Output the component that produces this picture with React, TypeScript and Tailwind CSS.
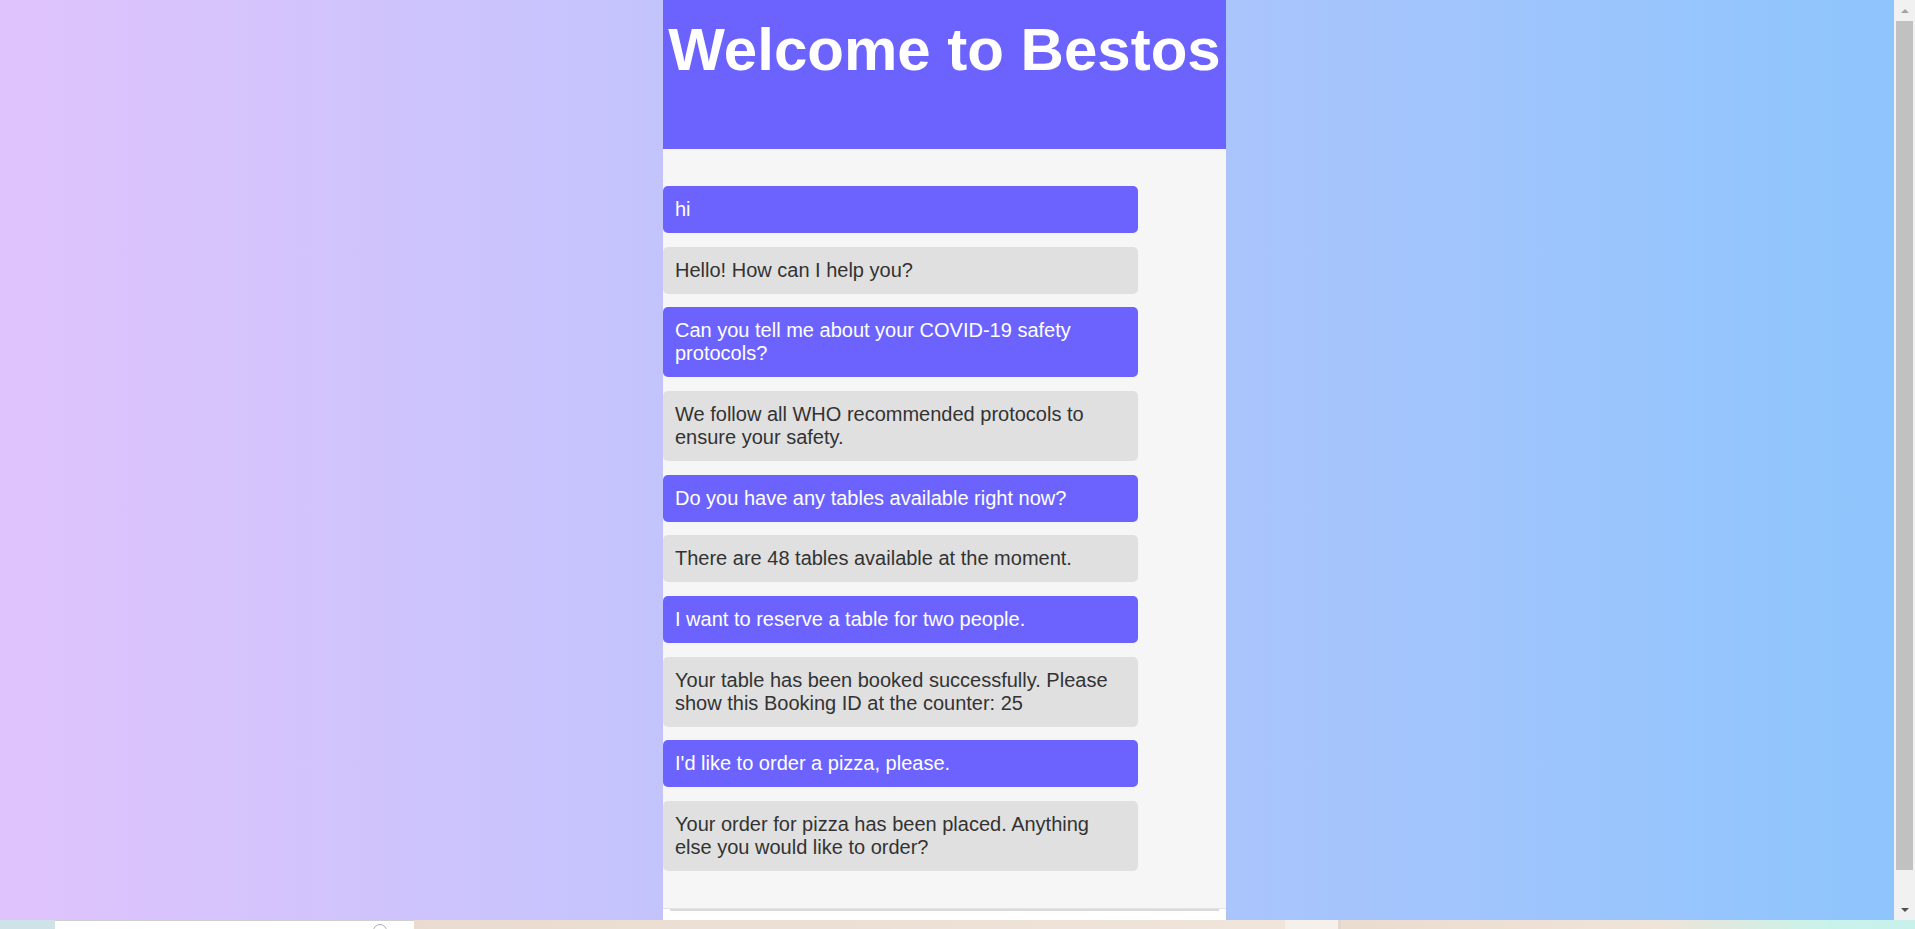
import React from 'react'

type Message = { from: 'user' | 'bot'; text: string }

const messages: Message[] = [
  { from: 'user', text: 'hi' },
  { from: 'bot', text: 'Hello! How can I help you?' },
  { from: 'user', text: 'Can you tell me about your COVID-19 safety protocols?' },
  { from: 'bot', text: 'We follow all WHO recommended protocols to ensure your safety.' },
  { from: 'user', text: 'Do you have any tables available right now?' },
  { from: 'bot', text: 'There are 48 tables available at the moment.' },
  { from: 'user', text: 'I want to reserve a table for two people.' },
  {
    from: 'bot',
    text: 'Your table has been booked successfully. Please show this Booking ID at the counter: 25',
  },
  { from: 'user', text: "I'd like to order a pizza, please." },
  { from: 'bot', text: 'Your order for pizza has been placed. Anything else you would like to order?' },
]

function Bubble({ message }: { message: Message }) {
  const isUser = message.from === 'user'
  return (
    <div
      className={
        isUser
          ? 'w-[475px] rounded-[5px] bg-[#6c63ff] px-3 py-3 text-[20px] leading-[23px] text-white'
          : 'w-[475px] rounded-[5px] bg-[#e0e0e0] px-3 py-3 text-[20px] leading-[23px] text-[#333333]'
      }
    >
      {message.text}
    </div>
  )
}

function Scrollbar() {
  return (
    <div className="flex h-full w-[21px] flex-col items-center bg-[#f1f1f1]">
      {/* up arrow */}
      <div className="flex h-[21px] w-full items-center justify-center">
        <div className="h-0 w-0 border-x-[4px] border-b-[4px] border-x-transparent border-b-[#a3a3a3]" />
      </div>
      {/* thumb */}
      <div className="h-[849px] w-[17px] bg-[#c1c1c1]" />
      <div className="flex-1" />
      {/* down arrow */}
      <div className="flex h-[21px] w-full items-center justify-center">
        <div className="h-0 w-0 border-x-[4px] border-t-[4px] border-x-transparent border-t-[#505050]" />
      </div>
    </div>
  )
}

function Taskbar() {
  return (
    <div className="flex h-[9px] w-full overflow-hidden">
      <div className="w-[55px] bg-[#cde3e8]" />
      <div className="relative w-[359px] border-t border-[#cfcfcf] bg-white">
        <div className="absolute left-[318px] top-[3px] h-[14px] w-[14px] rounded-full border border-[#a9a9b5]" />
      </div>
      <div className="w-[871px] bg-[linear-gradient(to_right,#e9dbcf,#f0e5db)]" />
      <div className="w-[56px] border-r-[3px] border-[#e2d7cf] bg-[#f6f0eb]" />
      <div className="flex-1 bg-[linear-gradient(to_right,#eadccf,#efe4d8_55%,#c7f2ea_85%,#c9f0ea)]" />
    </div>
  )
}

export default function App() {
  return (
    <div
      className="flex h-[929px] w-[1915px] flex-col overflow-hidden"
      style={{ fontFamily: '"Liberation Sans", Arial, sans-serif' }}
    >
      <div className="flex h-[920px] w-full">
        <main className="flex h-full flex-1 overflow-hidden bg-[linear-gradient(to_right,#e0c3fc,#8ec5fc)]">
          <div className="ml-[663px] flex h-full w-[563px] shrink-0 flex-col bg-[#f6f6f6]">
            <header className="h-[149px] shrink-0 bg-[#6c63ff] pt-5 text-center">
              <h1 className="whitespace-nowrap text-[60px] font-bold leading-none text-white">
                Welcome to Bestos
              </h1>
            </header>

            {/* chat messages */}
            <div className="flex flex-col gap-[13.67px] py-[37px]">
              {messages.map((m, i) => (
                <Bubble key={i} message={m} />
              ))}
            </div>

            {/* input row, cut off by the viewport */}
            <div className="flex-1 border-t border-[#e3e3e3] bg-white px-[7px]">
              <div className="h-[30px] border-t-2 border-[#d9d9d9]" />
            </div>
          </div>
        </main>
        <Scrollbar />
      </div>
      <Taskbar />
    </div>
  )
}
